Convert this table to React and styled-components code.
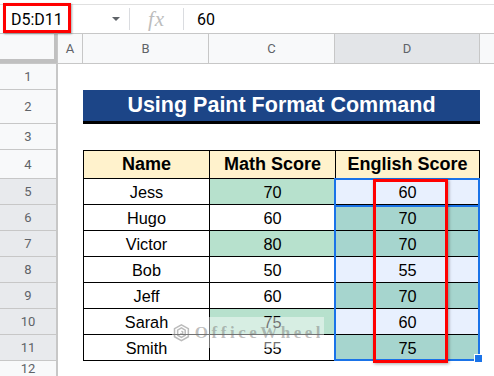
import React from "react";
import styled, { createGlobalStyle } from "styled-components";

const GlobalStyle = createGlobalStyle`
  html, body {
    margin: 0;
    padding: 0;
    background: #ffffff;
  }
  body {
    width: 494px;
    height: 376px;
    overflow: hidden;
    font-family: Roboto, "Liberation Sans", Arial, sans-serif;
  }
`;

const ROW_HEIGHTS = [26, 34, 26, 29, 26, 26, 26, 26, 26, 26, 26];
const SELECTED_ROWS = [5, 6, 7, 8, 9, 10, 11];

const DATA = [
  { name: "Jess", math: 70, english: 60 },
  { name: "Hugo", math: 60, english: 70 },
  { name: "Victor", math: 80, english: 70 },
  { name: "Bob", math: 50, english: 55 },
  { name: "Jeff", math: 60, english: 70 },
  { name: "Sarah", math: 75, english: 60 },
  { name: "Smith", math: 55, english: 75 },
];

// fills after paint format was applied to column D
const MATH_FILL = ["green", "white", "green", "white", "white", "green", "white"];
const ENG_FILL = ["blue", "teal", "teal", "blue", "teal", "blue", "teal"];

const FILLS = {
  white: "#ffffff",
  green: "#b7e1cd",
  blue: "#e8f0fe",
  teal: "#a6d5ce",
};

const App = () => {
  return (
    <Page>
      <GlobalStyle />
      <FormulaWrap>
        <FormulaBar>
          <NameBox>
            <NameText>D5:D11</NameText>
            <Caret />
            <Highlight />
          </NameBox>
          <Divider />
          <Fx>fx</Fx>
          <Divider />
          <FormulaValue>60</FormulaValue>
        </FormulaBar>
      </FormulaWrap>

      <Sheet>
        <Corner />
        {["A", "B", "C", "D"].map((c) => (
          <ColHeader key={c} $selected={c === "D"}>
            {c}
          </ColHeader>
        ))}
        <ColHeader $last />

        {ROW_HEIGHTS.map((h, i) => (
          <RowHeader
            key={i}
            style={{ gridRow: i + 2 }}
            $selected={SELECTED_ROWS.includes(i + 1)}
          >
            {i + 1}
          </RowHeader>
        ))}
        <RowHeader style={{ gridRow: 13 }}>12</RowHeader>

        <Title>Using Paint Format Command</Title>

        <TableWrap>
          <Table>
            <HeadCell>Name</HeadCell>
            <HeadCell>Math Score</HeadCell>
            <HeadCell>English Score</HeadCell>
            {DATA.map((row, i) => (
              <React.Fragment key={row.name}>
                <Cell $fill={FILLS.white}>{row.name}</Cell>
                <Cell $fill={FILLS[MATH_FILL[i]]}>{row.math}</Cell>
                <Cell $fill={FILLS[ENG_FILL[i]]}>{row.english}</Cell>
              </React.Fragment>
            ))}
          </Table>

          <Selection>
            <ActiveCell />
            <Handle />
          </Selection>
          <RedBox />

          <Watermark>
            <svg width="32" height="32" viewBox="0 0 30 30">
              <g fill="none" stroke="rgba(120,120,120,0.5)" strokeWidth="2.4">
                <path d="M15 2 L26 8 L26 21 L15 27 L4 21 L4 8 Z" />
                <path d="M15 7 L21 10.5 L21 18.5 L15 22 L9 18.5 L9 10.5 Z" />
                <path d="M15 12 L17 13.2 L17 16 L15 17 L13 16" />
              </g>
            </svg>
            <MarkText>OfficeWheel</MarkText>
          </Watermark>
        </TableWrap>
      </Sheet>
    </Page>
  );
};

export default App;

const Page = styled.div`
  width: 494px;
  height: 376px;
  display: flex;
  flex-direction: column;
  background: #ffffff;
`;

const FormulaWrap = styled.div`
  padding-top: 4px;
  height: 30px;
`;

const FormulaBar = styled.div`
  height: 28px;
  display: flex;
  align-items: center;
  border-top: 1px solid #e0e0e0;
  border-bottom: 1px solid #c7c7c7;
`;

const NameBox = styled.div`
  position: relative;
  width: 129px;
  height: 100%;
  display: flex;
  align-items: center;
  padding-left: 11px;
  box-sizing: border-box;
`;

const NameText = styled.span`
  font-size: 16px;
  color: #000000;
  flex: 1;
`;

const Caret = styled.span`
  width: 0;
  height: 0;
  margin-right: 9px;
  border-left: 4px solid transparent;
  border-right: 4px solid transparent;
  border-top: 4px solid #5f6368;
`;

const Highlight = styled.div`
  position: absolute;
  left: 3px;
  top: -2px;
  width: 68px;
  height: 30px;
  box-sizing: border-box;
  border: 3px solid #ff0000;
  box-shadow: 1px 1px 2px rgba(0, 0, 0, 0.35);
`;

const Divider = styled.div`
  width: 1px;
  height: 22px;
  background: #dadce0;
`;

const Fx = styled.span`
  width: 53px;
  text-align: center;
  font-family: "Liberation Serif", "DejaVu Serif", serif;
  font-style: italic;
  font-size: 21px;
  color: #bdbdbd;
  letter-spacing: 1px;
`;

const FormulaValue = styled.span`
  padding-left: 13px;
  font-size: 16px;
  color: #000000;
`;

const Sheet = styled.div`
  flex: 1;
  display: grid;
  grid-template-columns: 58px 25px 126px 126px 145px 1fr;
  grid-template-rows: 30px 26px 34px 26px 29px repeat(7, 26px) 1fr;
  overflow: hidden;
`;

const Corner = styled.div`
  grid-row: 1;
  grid-column: 1;
  background: #f8f9fa;
  border-right: 1px solid #c7c7c7;
  border-bottom: 1px solid #c7c7c7;
  box-shadow: inset -4px -5px 0 -1px #c0c0c0;
`;

const ColHeader = styled.div`
  grid-row: 1;
  display: flex;
  align-items: center;
  justify-content: center;
  font-size: 13px;
  color: #5f6368;
  background: ${(p) => (p.$selected ? "#e3e5e8" : "#f8f9fa")};
  border-right: ${(p) => (p.$last ? "none" : "1px solid #c7c7c7")};
  border-bottom: 1px solid #c7c7c7;
`;

const RowHeader = styled.div`
  grid-column: 1;
  display: flex;
  align-items: center;
  justify-content: center;
  font-size: 13px;
  color: #5f6368;
  background: ${(p) => (p.$selected ? "#e8eaed" : "#f8f9fa")};
  border-right: 2px solid #c7c7c7;
  border-bottom: 1px solid #c7c7c7;
  box-sizing: border-box;
`;

const Title = styled.div`
  grid-row: 3;
  grid-column: 3 / 6;
  display: flex;
  align-items: center;
  justify-content: center;
  background: #1c4587;
  border-bottom: 3px solid #000000;
  color: #ffffff;
  font-family: "Liberation Sans", Arial, sans-serif;
  font-weight: 700;
  font-size: 21.5px;
`;

const TableWrap = styled.div`
  grid-row: 5 / 13;
  grid-column: 3 / 6;
  position: relative;
`;

const Table = styled.div`
  display: grid;
  grid-template-columns: 125px 125px 1fr;
  grid-template-rows: 27px repeat(7, 25px);
  gap: 1px;
  background: #000000;
  border: 1px solid #000000;
  font-family: "Liberation Sans", Arial, sans-serif;
`;

const HeadCell = styled.div`
  display: flex;
  align-items: center;
  justify-content: center;
  background: #fff2cc;
  font-weight: 700;
  font-size: 18px;
  color: #000000;
`;

const Cell = styled.div`
  display: flex;
  align-items: flex-end;
  justify-content: center;
  padding-bottom: 2px;
  box-sizing: border-box;
  background: ${(p) => p.$fill};
  font-size: 16.3px;
  color: #000000;
`;

const Selection = styled.div`
  position: absolute;
  left: 251px;
  top: 28px;
  width: 146px;
  height: 183px;
  box-sizing: border-box;
  border: 2px solid #1a73e8;
`;

const ActiveCell = styled.div`
  height: 25px;
  border-bottom: 2px solid #1a73e8;
`;

const Handle = styled.div`
  position: absolute;
  right: -5px;
  bottom: -4px;
  width: 7px;
  height: 7px;
  background: #1a73e8;
  border: 1px solid #ffffff;
`;

const RedBox = styled.div`
  position: absolute;
  left: 290px;
  top: 29px;
  width: 75px;
  height: 184px;
  box-sizing: border-box;
  border: 3px solid #ff0000;
  box-shadow: 1px 1px 3px rgba(0, 0, 0, 0.35);
`;

const Watermark = styled.div`
  position: absolute;
  left: 89px;
  top: 167px;
  width: 152px;
  height: 31px;
  display: flex;
  align-items: center;
  gap: 4px;
  background: rgba(255, 255, 255, 0.45);
`;

const MarkText = styled.span`
  font-family: "Liberation Serif", "DejaVu Serif", serif;
  font-weight: 700;
  font-size: 17px;
  letter-spacing: 3.5px;
  color: rgba(110, 110, 110, 0.45);
`;
